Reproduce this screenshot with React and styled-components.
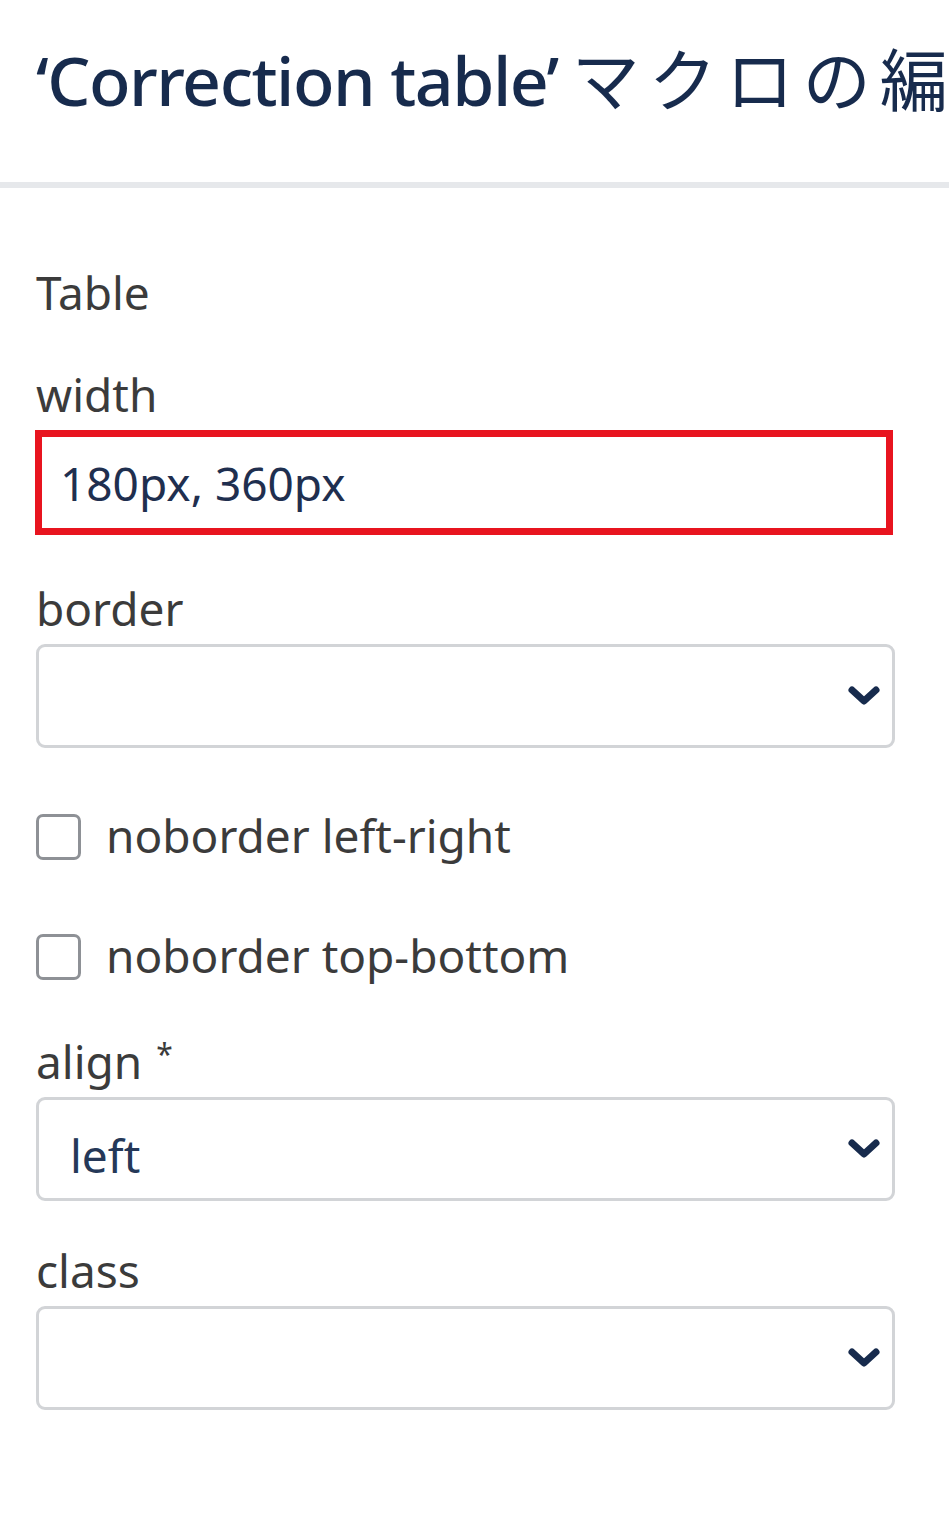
import React from "react";
import styled, { createGlobalStyle } from "styled-components";

const Global = createGlobalStyle`
  html, body { margin: 0; padding: 0; background: #ffffff; }
  body {
    font-family: "Noto Sans", "Open Sans", "Noto Sans CJK JP", sans-serif;
    -webkit-font-smoothing: antialiased;
  }
`;

const Page = styled.div`
  width: 949px;
  min-height: 1518px;
  background: #fff;
  overflow: hidden;
`;

const Header = styled.header`
  height: 188px;
  border-bottom: 6px solid #e6e8eb;
  padding-left: 36px;
  box-sizing: border-box;
  display: flex;
  align-items: flex-start;
  white-space: nowrap;
  overflow: hidden;
`;

const Title = styled.h1`
  margin: 29px 0 0;
  font-size: 68px;
  line-height: 96px;
  font-weight: 500;
  letter-spacing: -1.5px;
  color: #172b4d;
`;

const Jp = styled.span`
  font-family: "Noto Sans CJK JP", sans-serif;
  font-weight: 400;
  letter-spacing: 9px;
  margin-left: 14px;
`;

const Form = styled.form`
  padding: 71px 54px 0 36px;
  display: flex;
  flex-direction: column;
`;

const Text = styled.div`
  font-size: 46px;
  line-height: 66px;
  color: #3b3b3b;
  margin-top: ${(p) => p.$mt || 0}px;
`;

const Field = styled.div`
  margin-top: ${(p) => p.$mt || 0}px;
  display: flex;
  flex-direction: column;
  gap: 3px;
`;

const Input = styled.div`
  height: 105px;
  box-sizing: border-box;
  border: 7px solid #e8141f;
  display: flex;
  align-items: center;
  padding-left: 18px;
  font-size: 46px;
  color: #1f2f4f;
  margin-left: -1px;
  margin-right: 2px;
`;

const Select = styled.div`
  height: 104px;
  box-sizing: border-box;
  border: 3px solid #d2d4d7;
  border-radius: 9px;
  display: flex;
  align-items: center;
  justify-content: space-between;
  padding: 0 11px 0 31px;
  font-size: 46px;
  color: #253858;
  line-height: 66px;
  padding-top: 8px;
`;

const Value = styled.span`
  padding-top: 4px;
`;

const Chevron = styled.svg`
  width: 34px;
  height: 22px;
  margin-top: -8px;
  flex: none;
`;

const CheckRow = styled.label`
  margin-top: ${(p) => p.$mt || 0}px;
  display: flex;
  align-items: center;
  gap: 25px;
  font-size: 46px;
  line-height: 66px;
  color: #3b3b3b;
`;

const Box = styled.span`
  width: 45px;
  height: 46px;
  box-sizing: border-box;
  border: 3px solid #8e9196;
  border-radius: 7px;
  background: #fff;
  flex: none;
  margin-top: 4px;
`;

const Star = styled.span`
  font-size: 30px;
  vertical-align: 14px;
  margin-left: 14px;
`;

const ChevronIcon = () => (
  <Chevron viewBox="0 0 34 22">
    <path
      d="M5 5 L17 16 L29 5"
      fill="none"
      stroke="#172b4d"
      strokeWidth="7"
      strokeLinecap="round"
      strokeLinejoin="round"
    />
  </Chevron>
);

const SelectField = ({ value }) => (
  <Select>
    <Value>{value}</Value>
    <ChevronIcon />
  </Select>
);

export default function App() {
  return (
    <Page>
      <Global />
      <Header>
        <Title>
          ‘Correction table’<Jp>マクロの編集</Jp>
        </Title>
      </Header>
      <Form>
        <Text>Table</Text>
        <Field $mt={36}>
          <Text>width</Text>
          <Input>180px, 360px</Input>
        </Field>
        <Field $mt={40}>
          <Text>border</Text>
          <SelectField value="" />
        </Field>
        <CheckRow $mt={54}>
          <Box />
          noborder left-right
        </CheckRow>
        <CheckRow $mt={54}>
          <Box />
          noborder top-bottom
        </CheckRow>
        <Field $mt={33}>
          <Text>
            align<Star>*</Star>
          </Text>
          <SelectField value="left" />
        </Field>
        <Field $mt={36}>
          <Text>class</Text>
          <SelectField value="" />
        </Field>
      </Form>
    </Page>
  );
}
